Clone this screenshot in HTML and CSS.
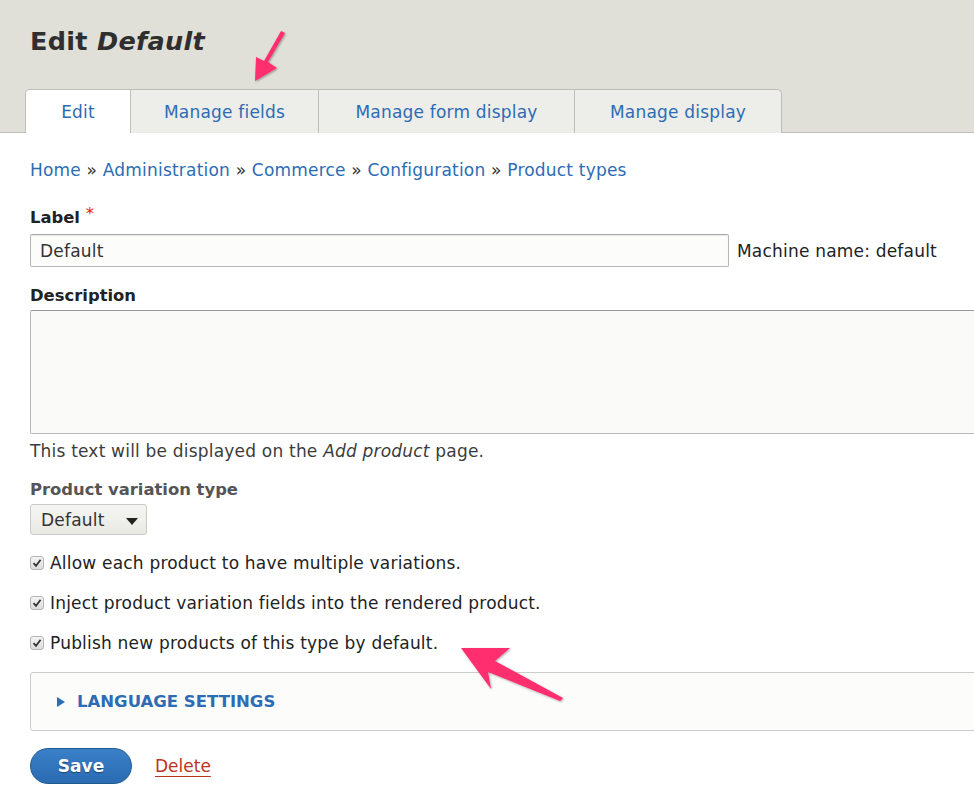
FILE: index.html
```html
<!DOCTYPE html>
<html>
<head>
<meta charset="utf-8">
<link rel="stylesheet" href="styles.css">
</head>
<body>
<header class="page-head">
  <h1 class="title">Edit <em>Default</em></h1>
  <nav class="tabs">
    <a class="tab active">Edit</a>
    <a class="tab t2">Manage fields</a>
    <a class="tab t3">Manage form display</a>
    <a class="tab t4">Manage display</a>
  </nav>
</header>
<main class="content">
  <div class="breadcrumb">
    <a>Home</a> » <a>Administration</a> » <a>Commerce</a> » <a>Configuration</a> » <a>Product types</a>
  </div>
  <div class="field">
    <label class="lbl">Label <span class="req">*</span></label>
    <div class="row">
      <div class="input">Default</div>
      <span class="machine">Machine name: default</span>
    </div>
  </div>
  <div class="field">
    <label class="lbl">Description</label>
    <div class="textarea"></div>
    <div class="help">This text will be displayed on the <em>Add product</em> page.</div>
  </div>
  <div class="field">
    <label class="lbl muted">Product variation type</label>
    <div class="select">Default <span class="caret"></span></div>
  </div>
  <div class="checks">
    <div class="check"><span class="box"><svg width="10" height="10" viewBox="0 0 10 10"><path d="M1.5 5.2 L4 7.8 L8.6 1.8" fill="none" stroke="#333" stroke-width="1.8"/></svg></span>Allow each product to have multiple variations.</div>
    <div class="check"><span class="box"><svg width="10" height="10" viewBox="0 0 10 10"><path d="M1.5 5.2 L4 7.8 L8.6 1.8" fill="none" stroke="#333" stroke-width="1.8"/></svg></span>Inject product variation fields into the rendered product.</div>
    <div class="check"><span class="box"><svg width="10" height="10" viewBox="0 0 10 10"><path d="M1.5 5.2 L4 7.8 L8.6 1.8" fill="none" stroke="#333" stroke-width="1.8"/></svg></span>Publish new products of this type by default.</div>
  </div>
  <div class="details"><span class="tri"></span>LANGUAGE SETTINGS</div>
  <div class="actions">
    <button class="save">Save</button>
    <a class="delete">Delete</a>
  </div>
</main>
<svg class="arrows" width="974" height="806" viewBox="0 0 974 806">
  <defs>
    <filter id="sh" x="-20%" y="-20%" width="140%" height="140%">
      <feDropShadow dx="1" dy="1" stdDeviation="1" flood-color="#000" flood-opacity="0.35"/>
    </filter>
  </defs>
  <polygon filter="url(#sh)" fill="#ff2d6e" points="285,33 268,62 277,68 255,81 256,57 264,61 281,31"/>
  <polygon filter="url(#sh)" fill="#ff2d6e" points="461,648 510,648 495,661 563,698 560,701 488,672 491,689"/>
</svg>
</body>
</html>
```
FILE: styles.css
```css
* { box-sizing: border-box; }
html, body { margin: 0; padding: 0; }
body {
  width: 974px;
  height: 806px;
  overflow: hidden;
  font-family: "DejaVu Sans", "Lucida Grande", sans-serif;
  font-size: 17px;
  letter-spacing: 0.2px;
  color: #222330;
  background: #fff;
  position: relative;
}
.page-head {
  background: #e0e0d8;
  border-bottom: 1px solid #bfbfba;
  height: 133px;
  padding: 25px 0 0 30px;
}
.title {
  margin: 0;
  font-size: 25.5px;
  line-height: 32px;
  font-weight: bold;
  color: #2f2f2f;
  letter-spacing: 0.3px;
}
.title em { font-style: italic; }
.tabs {
  display: flex;
  margin: 32px 0 0 -5px;
  height: 44px;
}
.tab {
  display: flex;
  align-items: center;
  justify-content: center;
  height: 44px;
  background: #ededea;
  border: 1px solid #bfbfba;
  border-left: none;
  border-bottom: none;
  color: #2d6cb4;
  font-size: 17px;
  letter-spacing: 0.2px;
}
.tab.active {
  background: #fff;
  width: 106px;
  border-left: 1px solid #bfbfba;
  border-radius: 5px 0 0 0;
  height: 44px;
  position: relative;
  z-index: 1;
}
.t2 { width: 188px; }
.t3 { width: 256px; }
.t4 { width: 207px; border-radius: 0 5px 0 0; }
.content { padding: 27px 0 0 30px; }
.breadcrumb {
  color: #333;
  font-size: 17px;
  line-height: 20px;
}
.breadcrumb a { color: #2d6cb4; }
.field { margin-top: 28px; }
.field + .field { margin-top: 19px; }
.lbl {
  display: block;
  font-weight: bold;
  font-size: 16.4px;
  line-height: 20px;
  letter-spacing: 0;
  color: #222;
}
.lbl.muted { color: #555; }
.req { color: #e32700; font-weight: normal; position: relative; top: -4px; }
.row { display: flex; align-items: center; margin-top: 6px; }
.input {
  width: 699px;
  height: 33px;
  border: 1px solid #b8b8b8;
  border-top-color: #a8a8a8;
  border-radius: 2px;
  background: #fcfcfa;
  padding: 0 9px;
  display: flex;
  align-items: center;
  color: #333;
  box-shadow: inset 0 1px 1px rgba(0,0,0,0.08);
}
.machine { margin-left: 8px; color: #222; }
.textarea {
  margin-top: 4px;
  width: 960px;
  height: 124px;
  border: 1px solid #b8b8b8;
  border-top-color: #999;
  border-radius: 2px;
  background: #fafaf8;
}
.help {
  margin-top: 7px;
  line-height: 20px;
  color: #3c3c3c;
}
.select {
  margin-top: 4px;
  width: 117px;
  height: 31px;
  border: 1px solid #cacaca;
  border-radius: 3px;
  background: linear-gradient(#f5f5f2, #e9e9e4);
  display: flex;
  align-items: center;
  padding: 0 0 0 10px;
  color: #333;
  position: relative;
}
.caret {
  position: absolute;
  right: 8px;
  top: 13px;
  width: 0; height: 0;
  border-left: 6px solid transparent;
  border-right: 6px solid transparent;
  border-top: 7px solid #222;
}
.checks { margin-top: 18px; display: flex; flex-direction: column; gap: 20px; }
.check {
  display: flex;
  align-items: center;
  line-height: 20px;
  color: #222;
}
.box {
  width: 14px; height: 14px;
  border: 1px solid #b5b5b5;
  border-radius: 3px;
  background: linear-gradient(#f4f4f4, #dcdcdc);
  margin-right: 6px;
  display: flex;
  align-items: center;
  justify-content: center;
}
.details {
  margin-top: 19px;
  width: 960px;
  height: 59px;
  border: 1px solid #ccc;
  border-radius: 3px;
  background: #fcfcfa;
  display: flex;
  align-items: center;
  padding-left: 26px;
  font-weight: bold;
  font-size: 16.5px;
  color: #2d6cb4;
  letter-spacing: 0;
}
.tri {
  width: 0; height: 0;
  border-top: 5px solid transparent;
  border-bottom: 5px solid transparent;
  border-left: 8px solid #2d6cb4;
  margin-right: 12px;
}
.actions { display: flex; align-items: center; margin-top: 17px; }
.save {
  width: 102px;
  height: 36px;
  border-radius: 20px;
  border: 1px solid #1e5c90;
  background: linear-gradient(#3a80c8, #2a6bb2);
  color: #fff;
  font-family: "DejaVu Sans", sans-serif;
  font-weight: bold;
  font-size: 17px;
  padding: 0;
  text-shadow: 0 1px 1px rgba(0,0,0,0.4);
}
.delete {
  margin-left: 23px;
  color: #bc3522;
  text-decoration: underline;
  text-underline-offset: 4px;
  letter-spacing: 0;
}
.arrows { position: absolute; left: 0; top: 0; pointer-events: none; }
```
